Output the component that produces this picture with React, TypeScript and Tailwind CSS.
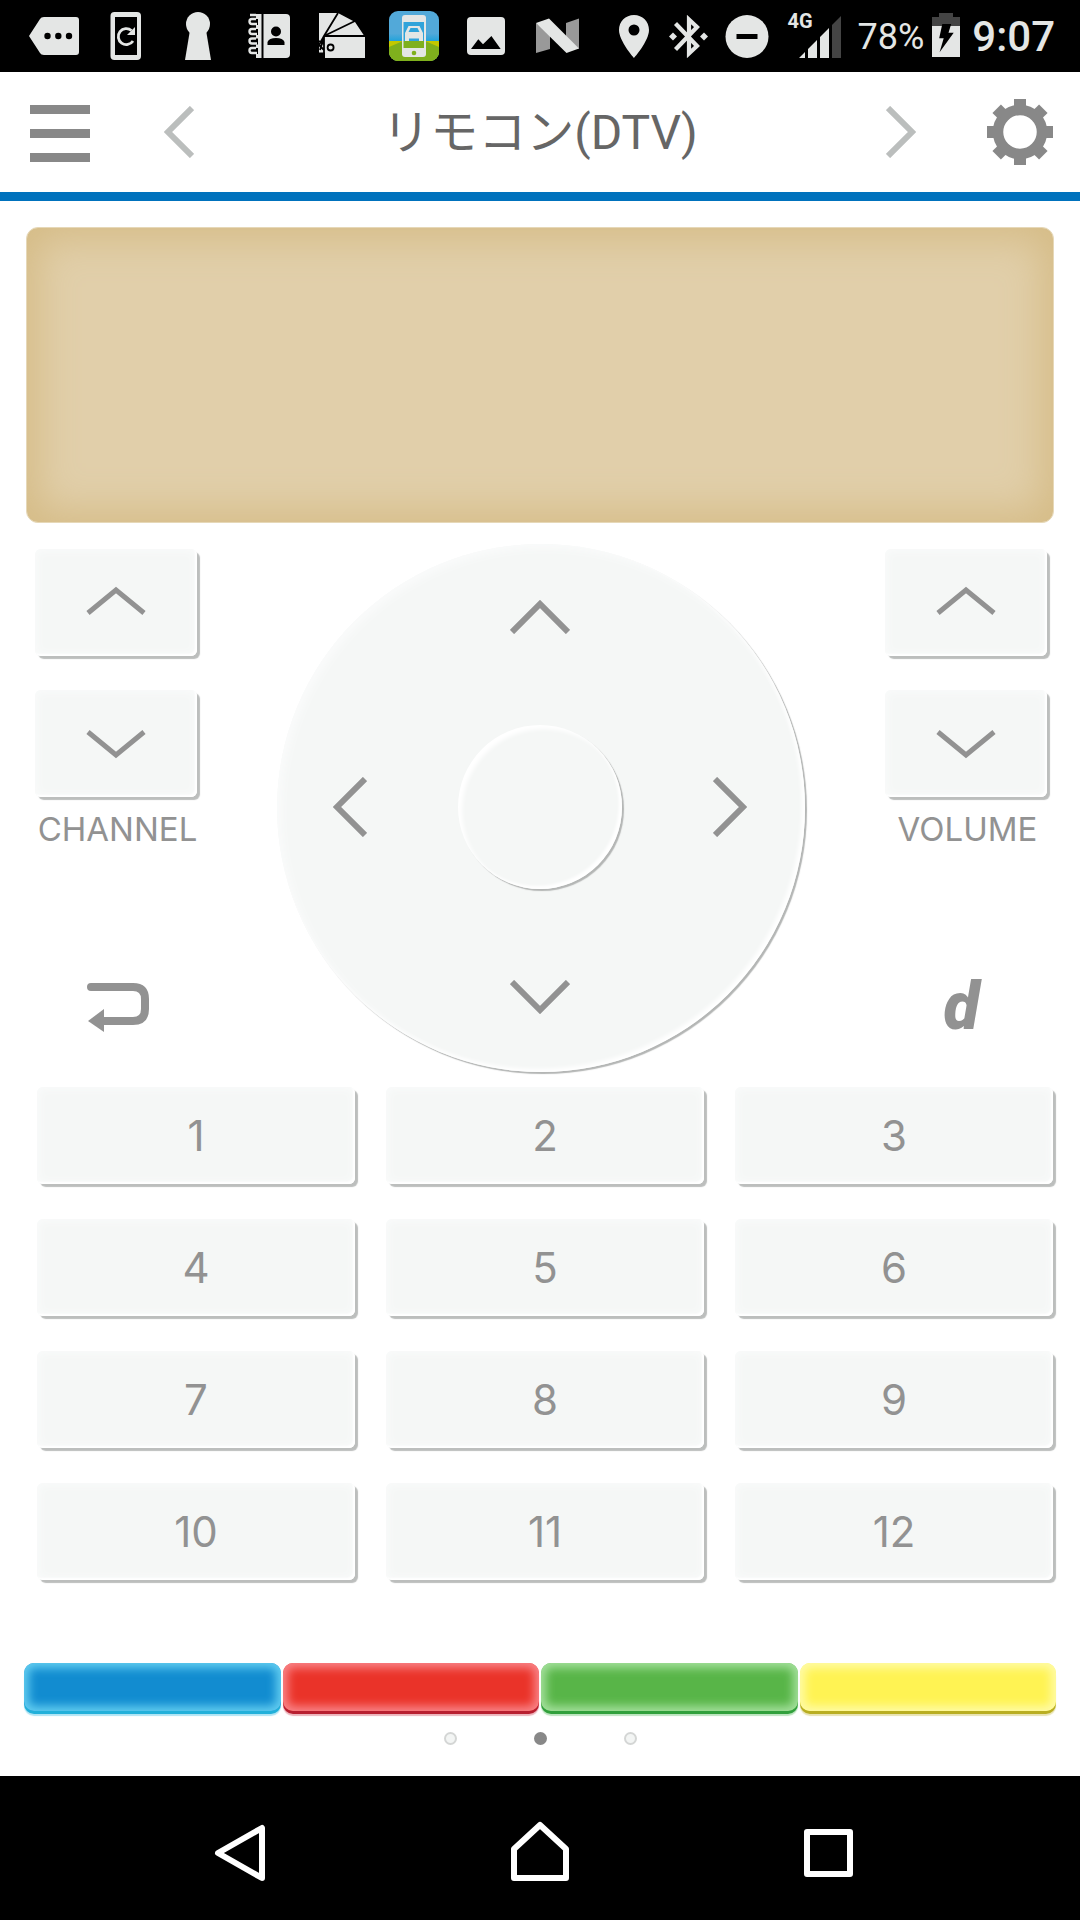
import React, { useState } from "react";
import clsx from "clsx";

const NUMBER_KEYS = [1, 2, 3, 4, 5, 6, 7, 8, 9, 10, 11, 12];

const COLOR_KEYS = [
  {
    name: "青",
    style:
      "bg-[#128cd0] shadow-[inset_0_0_10px_5px_#62cdf0,0_3px_0_#22b0da,0_5px_1px_#b0e4f4]",
  },
  {
    name: "赤",
    style:
      "bg-[#ea3329] shadow-[inset_0_0_10px_5px_#f98488,0_3px_0_#b81f30,0_5px_1px_#ecb4bc]",
  },
  {
    name: "緑",
    style:
      "bg-[#58b548] shadow-[inset_0_0_10px_5px_#a4e09c,0_3px_0_#31a03c,0_5px_1px_#bde4bf]",
  },
  {
    name: "黄",
    style:
      "bg-[#fff353] shadow-[inset_0_0_10px_5px_#fffba6,0_3px_0_#b9ae22,0_5px_1px_#e8e3b2]",
  },
];

const keyFace =
  "rounded-md bg-[#f5f7f6] shadow-[inset_-2px_-2px_2px_#ffffff,inset_0_0_8px_2px_#fafbfb,3px_3px_1px_#bcbebd]";

// STATUS BAR ----------------------
function NotificationIcons() {
  return (
    <div className="flex text-[#e4e6e5]">
      <svg className="size-18" viewBox="0 0 72 72" fill="currentColor">
        <path d="M11 36L22 19Q23 17 26 17H58Q61 17 61 20V52Q61 55 58 55H26Q23 55 22 53Z" />
        <g fill="#000">
          <circle cx="29.5" cy="36" r="3.2" />
          <circle cx="40.3" cy="36" r="3.2" />
          <circle cx="51" cy="36" r="3.2" />
        </g>
      </svg>
      <svg className="size-18" viewBox="0 0 72 72" fill="currentColor">
        <rect x="20.5" y="12" width="30.5" height="48" rx="4" />
        <rect x="25" y="17" width="22" height="38" fill="#000" />
        <path
          d="M43 41A8 8 0 1 1 41.5 30.5"
          fill="none"
          stroke="currentColor"
          strokeWidth="2.8"
        />
        <path d="M45 27V35H37Z" />
      </svg>
      <svg className="size-18" viewBox="0 0 72 72" fill="currentColor">
        <circle cx="36" cy="24" r="12" />
        <path d="M28 30H44L49 60H23Z" />
      </svg>
      <svg className="size-18" viewBox="0 0 72 72" fill="currentColor">
        <path d="M22 14H52Q56 14 56 18V54Q56 58 52 58H22Z" />
        <path d="M28.5 14V58" stroke="#000" strokeWidth="2" />
        <path
          d="M24 22H21M24 32H21M24 41.5H21M24 51H21"
          stroke="#000"
          strokeWidth="6"
        />
        <path
          d="M23 24H18Q15.5 24 15.5 21.5T18 19H22M23 34H18Q15.5 34 15.5 31.5T18 29H22M23 43.5H18Q15.5 43.5 15.5 41T18 38.5H22M23 53H18Q15.5 53 15.5 50.5T18 48H22M16 15H22"
          fill="none"
          stroke="currentColor"
          strokeWidth="2.4"
        />
        <circle cx="42" cy="31.5" r="5" fill="#000" />
        <path d="M33.5 45V42Q35 38 42 38T50.5 42V45Z" fill="#000" />
      </svg>
      <svg className="size-18" viewBox="0 0 72 72" fill="currentColor">
        <path d="M13 13H32L49 22L59 37V58H19V52.5H13Z" />
        <g fill="none" stroke="#000" strokeWidth="1.8">
          <path d="M13 45L18 36L32 13M18 36L49 21M18 36H59M18 36V58M18 37L14 50M18 44L13 41M18 50L13 45" />
          <circle cx="24.6" cy="47.5" r="3" />
        </g>
      </svg>
      <svg className="size-18" viewBox="0 0 72 72">
        <defs>
          <linearGradient id="sky" x1="0" y1="0" x2="0" y2="1">
            <stop offset="0.45" stopColor="#52a9d9" />
            <stop offset="0.7" stopColor="#009fdc" />
          </linearGradient>
          <clipPath id="tile">
            <rect x="11" y="11" width="50" height="50" rx="9" />
          </clipPath>
        </defs>
        <g clipPath="url(#tile)">
          <rect x="11" y="11" width="50" height="50" fill="url(#sky)" />
          <rect x="11" y="41" width="50" height="20" fill="#c3c800" />
          <path d="M11 47L25 41H47L61 47V61H11Z" fill="#7fb01d" />
        </g>
        <rect x="24" y="15" width="24" height="42" rx="3" fill="#e4e6e5" />
        <rect x="25.5" y="22" width="20.5" height="19" fill="#31a3da" />
        <rect x="25.5" y="41" width="20.5" height="7" fill="#7fb01d" />
        <circle cx="36" cy="53" r="2.3" fill="#7fb01d" />
        <path
          d="M27 33L30.5 26H41.5L45 33V41H41V38.5H31V41H27ZM30.5 32H41.5L39.5 28H32.5Z"
          fill="#e4e6e5"
          fillRule="evenodd"
        />
      </svg>
      <svg className="size-18" viewBox="0 0 72 72" fill="currentColor">
        <rect x="17" y="17" width="38" height="38" rx="4" />
        <path d="M21 49L28.3 39.3L33 44.3L41.4 36L50.7 49Z" fill="#000" />
      </svg>
      <svg className="size-18" viewBox="0 0 72 72" fill="currentColor">
        <path d="M14 23L28 34V49L14 53ZM44 23L57 18.5V49L44 38Z" fill="#999" />
        <path d="M14 23L27 18.5L57 48.5L44.5 53Z" />
      </svg>
    </div>
  );
}

function StatusBar() {
  return (
    <div className="flex h-18 items-center justify-between bg-black pl-[18px] pr-[25px] font-['Roboto',sans-serif] text-[#e4e6e5]">
      <NotificationIcons />
      <div className="flex items-center">
        <svg className="h-18 w-[54px]" viewBox="0 0 54 72" fill="currentColor">
          <path
            d="M27 15C18.5 15 12 21.5 12 30C12 41 27 58 27 58S42 41 42 30C42 21.5 35.5 15 27 15ZM27 24.5A5.5 5.5 0 1 1 27 35.5A5.5 5.5 0 1 1 27 24.5Z"
            fillRule="evenodd"
          />
        </svg>
        <svg className="h-18 w-[54px]" viewBox="0 0 54 72" fill="currentColor">
          <path
            d="M14.5 23.5L36 46L28 53.5V19.5L36 27L14.5 49.5"
            fill="none"
            stroke="currentColor"
            strokeWidth="4.2"
          />
          <path d="M12 32.5L16 36.5L12 40.5L8 36.5ZM43 32.5L47 36.5L43 40.5L39 36.5Z" />
        </svg>
        <svg className="h-18 w-16" viewBox="0 0 64 72">
          <circle cx="32" cy="36.5" r="21.5" fill="currentColor" />
          <rect x="21.5" y="34" width="21" height="5" fill="#000" />
        </svg>
        <div className="relative ml-2 h-18 w-[54px]">
          <span className="absolute left-0 top-[9px] text-[20px] leading-6 font-bold">
            4G
          </span>
          <svg className="ml-3 h-18 w-[42px]" viewBox="0 0 42 72" fill="currentColor">
            <path d="M0 58L6 52V58ZM9 58V49L18 40V58ZM21 58V37L30 28V58Z" />
            <path d="M33 58V25L42 16V58Z" fill="#444" />
          </svg>
        </div>
        <span className="ml-4 pt-[2px] text-[36px] leading-[70px]">78%</span>
        <svg className="ml-2 h-18 w-7" viewBox="0 0 28 72">
          <path d="M7 13H21V17H28V26H0V17H7Z" fill="#444" />
          <path d="M0 26H28V57H0Z" fill="currentColor" />
          <path d="M10.3 24H19.2L16.5 32.7H21.7L7.6 52.3L11.7 38.3H7.2Z" />
        </svg>
        <span className="ml-3 pt-[2px] text-[42px] leading-[70px] font-medium">9:07</span>
      </div>
    </div>
  );
}

// HEADER ----------------------
function Header() {
  return (
    <header className="flex h-[129px] items-center border-b-9 border-[#0072bd] pl-[30px] pr-[27px] text-[#888888]">
      <button aria-label="メニュー" className="flex w-[60px] flex-col gap-[15px] pt-[2px]">
        <span className="h-[9px] w-full bg-current" />
        <span className="h-[9px] w-full bg-current" />
        <span className="h-[9px] w-full bg-current" />
      </button>
      <button aria-label="前へ" className="ml-[74px] text-[#bbbebd]">
        <svg className="h-[52px] w-[30px]" viewBox="0 0 30 52">
          <path d="M28 2L4 26L28 50" fill="none" stroke="currentColor" strokeWidth="6" />
        </svg>
      </button>
      <h1 className="flex-1 pt-[2px] text-center font-['Roboto','Noto_Sans_CJK_JP',sans-serif] text-[48px] leading-[60px] text-[#666666]">
        リモコン(DTV)
      </h1>
      <button aria-label="次へ" className="text-[#bbbebd]">
        <svg className="h-[52px] w-[30px]" viewBox="0 0 30 52">
          <path d="M2 2L26 26L2 50" fill="none" stroke="currentColor" strokeWidth="6" />
        </svg>
      </button>
      <button aria-label="設定" className="ml-[71px]">
        <svg className="size-[66px]" viewBox="-33 -33 66 66">
          <circle r="22" fill="none" stroke="currentColor" strokeWidth="10.5" />
          {[0, 45, 90, 135, 180, 225, 270, 315].map((angle) => (
            <rect
              key={angle}
              x="-6"
              y="-33"
              width="12"
              height="9"
              fill="currentColor"
              transform={`rotate(${angle})`}
            />
          ))}
        </svg>
      </button>
    </header>
  );
}

// CHANNEL / VOLUME COLUMN ----------------------
function RockerColumn({
  label,
  children,
}: {
  label: string;
  children: React.ReactNode;
}) {
  return (
    <div className="flex w-[165px] flex-col items-center pt-[6px]">
      <button
        aria-label={`${label} +`}
        className={clsx(keyFace, "mr-[3px] flex h-[107px] w-[162px] items-center justify-center pb-1")}
      >
        <svg className="h-[30px] w-[60px]" viewBox="0 0 60 30">
          <path d="M2 27L30 4L58 27" fill="none" stroke="#929292" strokeWidth="5" />
        </svg>
      </button>
      <button
        aria-label={`${label} -`}
        className={clsx(keyFace, "mt-[34px] mr-[3px] flex h-[107px] w-[162px] items-center justify-center")}
      >
        <svg className="h-[30px] w-[60px]" viewBox="0 0 60 30">
          <path d="M2 3L30 26L58 3" fill="none" stroke="#929292" strokeWidth="5" />
        </svg>
      </button>
      <span className="mt-3 text-[33px] leading-10 text-[#929292]">
        {label}
      </span>
      <div className="mt-[118px] flex h-20 items-center justify-center">{children}</div>
    </div>
  );
}

function Dial() {
  return (
    <div className="mt-px mr-[3px] grid size-[528px] grid-cols-3 grid-rows-3 place-items-center rounded-full bg-[#f5f7f6] pr-[3px] pb-[3px] shadow-[inset_-3px_-3px_4px_#ffffff,inset_4px_4px_8px_#fafbfb,2px_2px_1px_#b4b6b5]">
      <button aria-label="上" className="col-start-2 mb-[30px]">
        <svg className="h-[34px] w-[60px]" viewBox="0 0 60 34">
          <path d="M2 32L30 4L58 32" fill="none" stroke="#929292" strokeWidth="6" />
        </svg>
      </button>
      <button aria-label="左" className="col-start-1 row-start-2 mr-[30px]">
        <svg className="h-[60px] w-[34px]" viewBox="0 0 34 60">
          <path d="M32 2L4 30L32 58" fill="none" stroke="#929292" strokeWidth="6" />
        </svg>
      </button>
      <button
        aria-label="決定"
        className="col-start-2 row-start-2 size-[164px] rounded-full bg-[#f5f7f6] shadow-[inset_-3px_-3px_3px_#ffffff,inset_4px_4px_4px_#ffffff,2px_2px_1px_#b4b6b5]"
      />
      <button aria-label="右" className="col-start-3 row-start-2 ml-[30px]">
        <svg className="h-[60px] w-[34px]" viewBox="0 0 34 60">
          <path d="M2 2L30 30L2 58" fill="none" stroke="#929292" strokeWidth="6" />
        </svg>
      </button>
      <button aria-label="下" className="col-start-2 row-start-3 mt-[30px]">
        <svg className="h-[34px] w-[60px]" viewBox="0 0 60 34">
          <path d="M2 2L30 30L58 2" fill="none" stroke="#929292" strokeWidth="6" />
        </svg>
      </button>
    </div>
  );
}

// ANDROID NAVIGATION ----------------------
function NavigationBar() {
  return (
    <nav className="mt-auto flex h-36 items-center justify-center gap-[174px] bg-black text-white">
      <button aria-label="戻る">
        <svg className="h-18 w-[120px]" viewBox="0 0 120 72">
          <path d="M76 16V66L32 41Z" fill="none" stroke="currentColor" strokeWidth="6" strokeLinejoin="round" />
        </svg>
      </button>
      <button aria-label="ホーム">
        <svg className="h-18 w-[120px]" viewBox="0 0 120 72">
          <path d="M60 13L86 37V66H34V37Z" fill="none" stroke="currentColor" strokeWidth="6" strokeLinejoin="round" />
        </svg>
      </button>
      <button aria-label="履歴">
        <svg className="h-18 w-[120px]" viewBox="0 0 120 72">
          <rect x="33" y="20" width="43" height="42" fill="none" stroke="currentColor" strokeWidth="6" strokeLinejoin="round" />
        </svg>
      </button>
    </nav>
  );
}

export default function App() {
  const [page, setPage] = useState(1);

  return (
    <div className="flex min-h-screen flex-col bg-white font-['Inter','Noto_Sans_CJK_JP',sans-serif]">
      <StatusBar />
      <Header />

      <main className="pb-[30px]">
        {/* DISPLAY */}
        <div className="mx-[26px] mt-[26px] h-[296px] rounded-xl border border-[#e6d8b8] bg-[#e1cfaa] shadow-[inset_0_0_40px_10px_#d5bb85]" />

        {/* DIRECTION PAD */}
        <div className="mt-5 flex h-[532px] justify-between pl-[35px] pr-[30px]">
          <RockerColumn label="CHANNEL">
            <button aria-label="戻る">
              <svg className="h-[52px] w-16" viewBox="0 0 64 52">
                <path d="M5 6H47Q59 6 59 18V28Q59 40 47 40H16" fill="none" stroke="#929292" strokeWidth="8" strokeLinecap="round" />
                <path d="M2 40L18 28V51Z" fill="#929292" />
              </svg>
            </button>
          </RockerColumn>
          <Dial />
          <RockerColumn label="VOLUME">
            <button className="mr-3 font-['Roboto',sans-serif] text-[66px] leading-20 font-black text-[#929292] italic">
              d
            </button>
          </RockerColumn>
        </div>

        {/* NUMBER KEYS */}
        <div className="mt-3 grid grid-cols-3 gap-x-[31px] gap-y-[35px] pl-[37px] pr-[27px]">
          {NUMBER_KEYS.map((n) => (
            <button
              key={n}
              className={clsx(keyFace, "h-[97px] text-[42px] leading-[48px] text-[#929292]")}
            >
              {n}
            </button>
          ))}
        </div>

        {/* COLOR KEYS */}
        <div className="mt-[83px] grid grid-cols-4 gap-x-[2px] px-6 pb-[5px]">
          {COLOR_KEYS.map((key) => (
            <button
              key={key.name}
              aria-label={key.name}
              className={clsx("h-12 rounded-[10px]", key.style)}
            />
          ))}
        </div>

        {/* PAGER */}
        <div className="mt-4 flex justify-center gap-[77px]">
          {[0, 1, 2].map((i) => (
            <button
              key={i}
              aria-label={`${i + 1}ページ`}
              onClick={() => setPage(i)}
              className={clsx(
                "size-[13px] rounded-full",
                i === page
                  ? "bg-[#888888]"
                  : "border-2 border-[#d4d6d5] bg-[#f3f5f4]"
              )}
            />
          ))}
        </div>
      </main>

      <NavigationBar />
    </div>
  );
}
